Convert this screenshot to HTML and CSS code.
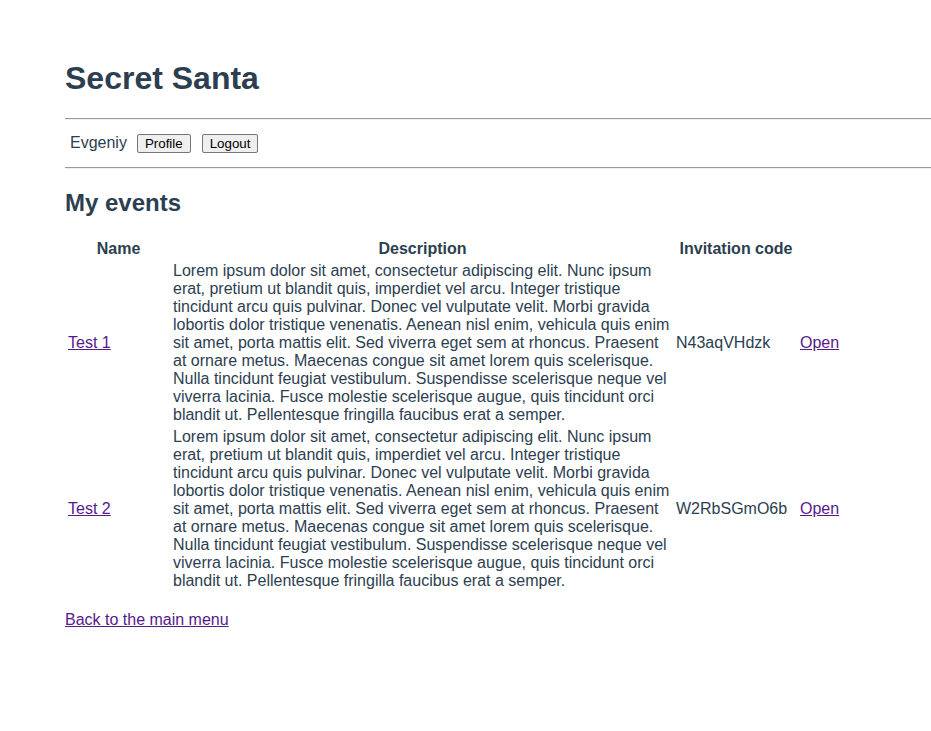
FILE: index.html
```html
<!DOCTYPE html>
<html lang="en">
<head>
<meta charset="utf-8">
<title>Secret Santa</title>
<link rel="stylesheet" href="styles.css">
</head>
<body>
<div class="app">
  <h1 class="title">Secret Santa</h1>
  <hr class="rule">
  <div class="nav"><span class="user">Evgeniy</span><button class="btn btn-first">Profile</button><button class="btn btn-next">Logout</button></div>
  <hr class="rule">
  <h2 class="section">My events</h2>
  <table class="events">
    <thead>
      <tr>
        <th class="c-name">Name</th>
        <th class="c-desc">Description</th>
        <th class="c-code">Invitation code</th>
        <th class="c-open"></th>
      </tr>
    </thead>
    <tbody>
      <tr>
        <td><a class="link" href="#">Test 1</a></td>
        <td>Lorem ipsum dolor sit amet, consectetur adipiscing elit. Nunc ipsum erat, pretium ut blandit quis, imperdiet vel arcu. Integer tristique tincidunt arcu quis pulvinar. Donec vel vulputate velit. Morbi gravida lobortis dolor tristique venenatis. Aenean nisl enim, vehicula quis enim sit amet, porta mattis elit. Sed viverra eget sem at rhoncus. Praesent at ornare metus. Maecenas congue sit amet lorem quis scelerisque. Nulla tincidunt feugiat vestibulum. Suspendisse scelerisque neque vel viverra lacinia. Fusce molestie scelerisque augue, quis tincidunt orci blandit ut. Pellentesque fringilla faucibus erat a semper.</td>
        <td>N43aqVHdzk</td>
        <td><a class="link" href="#">Open</a></td>
      </tr>
      <tr>
        <td><a class="link" href="#">Test 2</a></td>
        <td>Lorem ipsum dolor sit amet, consectetur adipiscing elit. Nunc ipsum erat, pretium ut blandit quis, imperdiet vel arcu. Integer tristique tincidunt arcu quis pulvinar. Donec vel vulputate velit. Morbi gravida lobortis dolor tristique venenatis. Aenean nisl enim, vehicula quis enim sit amet, porta mattis elit. Sed viverra eget sem at rhoncus. Praesent at ornare metus. Maecenas congue sit amet lorem quis scelerisque. Nulla tincidunt feugiat vestibulum. Suspendisse scelerisque neque vel viverra lacinia. Fusce molestie scelerisque augue, quis tincidunt orci blandit ut. Pellentesque fringilla faucibus erat a semper.</td>
        <td>W2RbSGmO6b</td>
        <td><a class="link" href="#">Open</a></td>
      </tr>
    </tbody>
  </table>
  <p class="back"><a class="link" href="#">Back to the main menu</a></p>
</div>
</body>
</html>
```

FILE: styles.css
```css
html, body {
  margin: 0;
  padding: 0;
  background: #ffffff;
}

.app {
  font-family: "Liberation Sans", Arial, Helvetica, sans-serif;
  color: #2c3e50;
  font-size: 16px;
  padding: 60px 0 0 65px;
}

.title {
  font-size: 32px;
  font-weight: bold;
  margin: 0 0 21px 0;
  line-height: 37px;
}

.rule {
  margin: 0;
  border: none;
  border-top: 1px solid #9a9a9a;
  border-bottom: 1px solid #eeeeee;
  height: 0;
}

.nav {
  display: flex;
  align-items: flex-start;
  margin: 8px 0;
  padding: 5px;
  height: 21px;
}

.user {
  color: #2c3e50;
  line-height: 18px;
  padding-top: 1px;
}

.btn {
  font-family: "Liberation Sans", Arial, sans-serif;
  font-size: 13.333px;
  color: #000000;
  background: #efefef;
  border: 1px solid #767676;
  border-radius: 2px;
  padding: 1px 7px;
  margin-top: 1px;
  line-height: 15px;
}

.btn-first { margin-left: 10px; }
.btn-next { margin-left: 11px; }

.section {
  font-size: 24px;
  font-weight: bold;
  line-height: 28px;
  margin: 20px 0 20px 0;
}

.events {
  table-layout: fixed;
  width: 777px;
  border-collapse: separate;
  border-spacing: 2px;
  margin-left: 0;
}

.events th,
.events td {
  padding: 1px;
  box-sizing: border-box;
  line-height: 18px;
}

.events th {
  font-weight: bold;
  text-align: center;
}

.events td {
  text-align: left;
  vertical-align: middle;
}

.c-name { width: 103px; }
.c-desc { width: 501px; }
.c-code { width: 122px; }
.c-open { width: 41px; }

.link {
  color: #551a8b;
  text-decoration: underline;
}

.back {
  margin: 18px 0 16px 0;
  line-height: 18px;
}
```
